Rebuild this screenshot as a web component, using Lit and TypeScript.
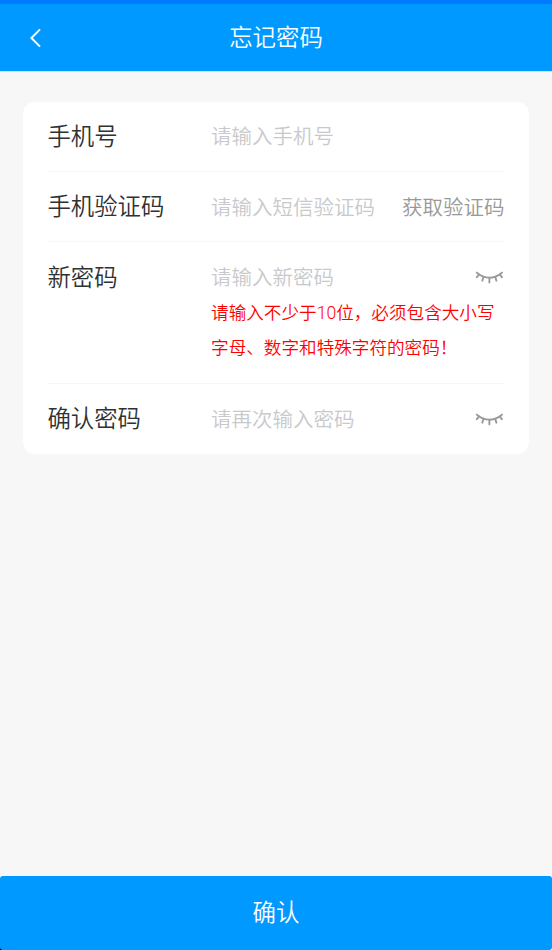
import { LitElement, css, html, nothing } from "lit";
import { customElement, property } from "lit/decorators.js";

interface Field {
  label: string;
  placeholder: string;
  action?: string;
  secret?: boolean;
  hint?: string;
}

const FIELDS: Field[] = [
  { label: "手机号", placeholder: "请输入手机号" },
  { label: "手机验证码", placeholder: "请输入短信验证码", action: "获取验证码" },
  {
    label: "新密码",
    placeholder: "请输入新密码",
    secret: true,
    hint: "请输入不少于10位，必须包含大小写字母、数字和特殊字符的密码！",
  },
  { label: "确认密码", placeholder: "请再次输入密码", secret: true },
];

/** Closed eye, shown while the password is hidden. */
@customElement("eye-closed")
export class EyeClosed extends LitElement {
  static styles = css`
    :host {
      display: block;
      flex: none;
      width: 31px;
      height: 16px;
      color: #999;
    }

    svg {
      display: block;
    }
  `;

  render() {
    return html`
      <svg
        width="31"
        height="16"
        viewBox="0 0 31 16"
        fill="none"
        stroke="currentColor"
        stroke-width="1.9"
        stroke-linecap="round"
      >
        <path d="M2.8 3.6Q8.5 8.6 15.4 8.6T28 3.6" />
        <path d="M4.9 5.6L2.9 8.2M9.5 7.8L8.3 11.7M15.4 8.8V13.4M21.2 7.8L22.4 11.7M25.9 5.6L27.9 8.2" />
      </svg>
    `;
  }
}

@customElement("form-row")
export class FormRow extends LitElement {
  @property({ attribute: false }) field!: Field;

  static styles = css`
    :host {
      display: block;
      box-sizing: border-box;
      min-height: 70.4px;
      border-bottom: 1px solid #f7f7f7;
    }

    :host(:last-child) {
      border-bottom: none;
    }

    .row {
      display: flex;
      align-items: center;
      height: 69.4px;
    }

    .label {
      flex: none;
      width: 163.7px;
      padding-bottom: 2.4px;
      color: #303133;
      font-size: 23.4px;
    }

    .input {
      flex: 1;
      min-width: 0;
      padding: 2px 0 0;
      border: none;
      outline: none;
      background: none;
      color: #303133;
      font: inherit;
      font-size: 20.5px;
      line-height: 34px;
    }

    .input::placeholder {
      color: #c8c9cc;
      opacity: 1;
    }

    .action {
      flex: none;
      padding-bottom: 1px;
      color: #999;
      font-size: 20.5px;
    }

    .hint {
      margin: -16px 0 16.8px 163.7px;
      color: #f00;
      font-size: 17.6px;
      line-height: 35.2px;
    }
  `;

  render() {
    const { label, placeholder, action, secret, hint } = this.field;
    return html`
      <div class="row">
        <span class="label">${label}</span>
        <input class="input" type=${secret ? "password" : "text"} placeholder=${placeholder} />
        ${action ? html`<span class="action">${action}</span>` : nothing}
        ${secret ? html`<eye-closed></eye-closed>` : nothing}
      </div>
      ${hint ? html`<div class="hint">${hint}</div>` : nothing}
    `;
  }
}

@customElement("app-root")
export class AppRoot extends LitElement {
  static styles = css`
    :host {
      display: flex;
      flex-direction: column;
      box-sizing: border-box;
      height: 950px;
      background: #f7f7f7;
      font-family: Roboto, "Noto Sans CJK SC", sans-serif;
      font-weight: 350;
    }

    .header {
      display: grid;
      grid-template-columns: 60px 1fr 60px;
      align-items: center;
      flex: none;
      box-sizing: border-box;
      height: 71px;
      border-top: 4px solid #007aff;
      background: #09f;
      box-shadow: 0 1px #c5e5f9;
      color: #fff;
    }

    .back {
      display: block;
      margin-left: 27px;
    }

    .title {
      padding-bottom: 3px;
      font-size: 23.4px;
      text-align: center;
    }

    .card {
      margin: 30.5px 23.5px 0 23.4px;
      padding: 0 24px;
      border-radius: 12px;
      background: #fff;
    }

    .footer {
      margin-top: auto;
      background: linear-gradient(to top right, #000 10%, #f7f7f7 10%);
    }

    .submit {
      display: block;
      width: 100%;
      height: 74px;
      padding: 0 0 5px;
      border: none;
      border-radius: 3px;
      background: #09f;
      color: #fff;
      font: inherit;
      font-size: 23.4px;
    }
  `;

  render() {
    return html`
      <header class="header">
        <svg
          class="back"
          width="16"
          height="20"
          viewBox="0 0 16 20"
          fill="none"
          stroke="currentColor"
          stroke-width="2"
        >
          <path d="M13 1.4L4.4 10L13 18.6" />
        </svg>
        <span class="title">忘记密码</span>
      </header>
      <main class="card">
        ${FIELDS.map((field) => html`<form-row .field=${field}></form-row>`)}
      </main>
      <footer class="footer">
        <button class="submit">确认</button>
      </footer>
    `;
  }
}

declare global {
  interface HTMLElementTagNameMap {
    "app-root": AppRoot;
    "eye-closed": EyeClosed;
    "form-row": FormRow;
  }
}
